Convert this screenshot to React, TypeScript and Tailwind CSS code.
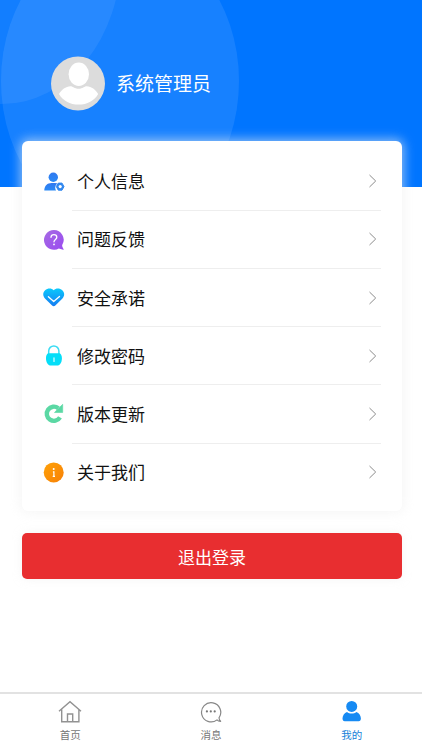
import type { ReactNode } from "react";

function UserSettingsIcon() {
  return (
    <svg width="22" height="22" viewBox="0 0 22 22">
      <defs>
        <linearGradient id="user" x1="0" y1="0" x2="0" y2="1">
          <stop offset="0" stopColor="#3179ef" />
          <stop offset="1" stopColor="#2a8af6" />
        </linearGradient>
      </defs>
      <circle cx="10.3" cy="6.2" r="4.7" fill="url(#user)" />
      <path d="M1.3 19.600c0-5 3.200-7.700 7.200-7.700h3.600c1 0 1.800.2 2.600.6-2.400 1.400-3.200 4.200-1.600 7.100z" fill="url(#user)" />
      <path d="m15.300 12.100 3.700 0 2 3.500-2 3.600h-3.700l-2-3.600z" fill="#3288ef" stroke="#3288ef" strokeWidth="1" strokeLinejoin="round" />
      <circle cx="17.200" cy="15.600" r="1.600" fill="#fff" />
    </svg>
  );
}

function QuestionIcon() {
  return (
    <svg width="22" height="22" viewBox="0 0 22 22">
      <defs>
        <linearGradient id="question" x1="0" y1="0" x2="1" y2="1">
          <stop offset="0" stopColor="#a66be3" />
          <stop offset="1" stopColor="#9a4bf0" />
        </linearGradient>
      </defs>
      <path d="M10.800 1a9.800 9.800 0 0 1 8.500 14.800c-.4.8 0 2 1.300 4.400.2.4 0 .6-.4.5l-4.400-1.200A9.900 9.900 0 1 1 10.800 1z" fill="url(#question)" />
      <path d="M8 8.300c.1-1.700 1.100-2.600 2.900-2.600s2.900 1 2.900 2.500c0 2.200-2.800 2.300-2.800 4.600" fill="none" stroke="#fff" strokeWidth="1.300" strokeLinecap="round" />
      <circle cx="11" cy="15.400" r=".9" fill="#fff" />
    </svg>
  );
}

function HeartIcon() {
  return (
    <svg width="22" height="22" viewBox="0 0 22 22">
      <defs>
        <linearGradient id="heart" x1="0" y1="0" x2="0" y2="1">
          <stop offset="0" stopColor="#09c9fc" />
          <stop offset="1" stopColor="#167bf2" />
        </linearGradient>
      </defs>
      <path d="M10.700 3.300C8.600.9 4.800.8 2.100 3.200c-2.700 2.600-2.300 6 .1 8.500l6.900 6.800c.9.900 2.300.9 3.200 0l6.900-6.800c2.400-2.500 2.800-5.900.1-8.500-2.700-2.400-6.500-2.300-8.600.1z" fill="url(#heart)" />
      <path d="m5.400 9.800 5.300 4.700 5.800-5" fill="none" stroke="#fff" strokeWidth="1.300" strokeLinecap="round" strokeLinejoin="round" />
    </svg>
  );
}

function LockIcon() {
  return (
    <svg width="22" height="22" viewBox="0 0 22 22">
      <path d="M5.700 10.500V6a5.100 5.100 0 0 1 10.200 0v4.500" fill="none" stroke="#3bdcf3" strokeWidth="1.500" />
      <path d="M5 8.300h11.800c1.600 1 2.100 3 2.100 5.200 0 3.400-1.600 7.100-5 7.100H8c-3.400 0-5-3.700-5-7.100 0-2.200.4-4.200 2-5.200z" fill="#05def8" />
      <path d="M11 12.900v3.500" stroke="#d5fbfd" strokeWidth="1.300" strokeLinecap="round" />
    </svg>
  );
}

function UpdateIcon() {
  return (
    <svg width="22" height="22" viewBox="0 0 22 22">
      <path d="M17 14.400A7.100 7.100 0 1 1 15.300 5.200" fill="none" stroke="#5bd8a4" strokeWidth="4.400" />
      <path d="M19.700 1.300v8.200h-8.200l3-3.200z" fill="#5bd8a4" stroke="#5bd8a4" strokeWidth=".6" strokeLinejoin="round" />
    </svg>
  );
}

function InfoIcon() {
  return (
    <svg width="22" height="22" viewBox="0 0 22 22">
      <defs>
        <linearGradient id="info" x1="0" y1="0" x2="1" y2="1">
          <stop offset="0" stopColor="#ffa207" />
          <stop offset="1" stopColor="#f78007" />
        </linearGradient>
      </defs>
      <circle cx="10.700" cy="10.400" r="10" fill="url(#info)" />
      <circle cx="10.700" cy="7.100" r="1" fill="#fff" />
      <path d="M9.900 9.900h1v4.400m-1.200 0h2.300" fill="none" stroke="#fff" strokeWidth="1.200" />
    </svg>
  );
}

function Row({ icon, label, last = false }: { icon: ReactNode; label: string; last?: boolean }) {
  return (
    <div className="flex h-[58.2px] items-stretch px-[21px]">
      <div className="flex w-[29px] items-center">{icon}</div>
      <div className={`flex flex-1 items-center justify-between border-b pr-[4px] pl-[5px] ${last ? "border-transparent" : "border-[#eeeeee]"}`}>
        <span className="text-[17px] leading-[24px] text-[#111]">{label}</span>
        <svg width="9" height="14" viewBox="0 0 9 14">
          <path d="m1.500 1 6.200 6-6.200 6" fill="none" stroke="#8c8c8c" strokeWidth="1" />
        </svg>
      </div>
    </div>
  );
}

function Tab({ icon, label, active = false }: { icon: ReactNode; label: string; active?: boolean }) {
  return (
    <div className={`flex flex-1 flex-col items-center pt-[5px] text-[10.5px] leading-[16px] ${active ? "text-[#1680d8]" : "text-[#777]"}`}>
      {icon}
      <span className="mt-[4px]">{label}</span>
    </div>
  );
}

export default function App() {
  return (
    <div className="flex h-[750px] w-full flex-col overflow-hidden bg-white font-['Noto_Sans_CJK_SC',sans-serif]">
      <header className="relative h-[187px] shrink-0 overflow-hidden bg-[#0075ff]">
        <svg className="absolute inset-0" width="422" height="187">
          <ellipse cx="120" cy="81" rx="119" ry="147" fill="#fff" fillOpacity=".09" />
          <ellipse cx="2" cy="-43" rx="119" ry="147" fill="#fff" fillOpacity=".07" />
        </svg>
        <div className="relative flex items-center pt-[56px] pl-[51px]">
          <svg width="54" height="55" viewBox="0 0 54 54">
            <circle cx="27" cy="27" r="27" fill="#dcdcdc" />
            <ellipse cx="27.800" cy="17.800" rx="10.200" ry="11.700" fill="#fff" />
            <path d="M8 37.500c2.500-4 6.700-7.700 11.500-7.700 2.500 0 3.800 2.500 8.100 2.500s5.600-2.500 8.100-2.500c4.800 0 9 3.700 11.500 7.700-3.900 6.700-10.900 10.600-19.600 10.600S11.900 44.200 8 37.500z" fill="#fff" />
          </svg>
          <span className="mb-[2px] ml-[11px] text-[19px] leading-[28px] text-white">系统管理员</span>
        </div>
      </header>
      <main className="relative z-10 -mt-[46px] flex flex-1 flex-col pr-[20px] pl-[22px]">
        <section className="h-[370px] rounded-[6px] bg-white pt-[11.6px] shadow-[0_0_11px_2px_rgba(240,240,240,0.6)]">
          <Row icon={<UserSettingsIcon />} label="个人信息" />
          <Row icon={<QuestionIcon />} label="问题反馈" />
          <Row icon={<HeartIcon />} label="安全承诺" />
          <Row icon={<LockIcon />} label="修改密码" />
          <Row icon={<UpdateIcon />} label="版本更新" />
          <Row icon={<InfoIcon />} label="关于我们" last />
        </section>
        <button className="mt-[22px] h-[46px] rounded-[5px] bg-[#e82e30] pt-[2px] text-[17px] text-white shadow-[0_0_10px_rgba(240,240,240,0.7)]">退出登录</button>
      </main>
      <nav className="flex h-[58px] shrink-0 border-t-2 border-[#e2e2e2]">
        <Tab
          label="首页"
          icon={
            <svg width="24" height="24" viewBox="0 0 24 24" fill="none" stroke="#929292" strokeWidth="1.4">
              <path d="M1 12.300 12 2.600l11 9.700M3.700 10.500v12.200h17.200V10.500M9.500 22.700V15h5.200v7.700" />
            </svg>
          }
        />
        <Tab
          label="消息"
          icon={
            <svg width="24" height="24" viewBox="0 0 24 24">
              <path d="M21.600 22.300c-1.400 0-2.800-.5-3.600-1.400A9.600 9.600 0 1 1 20 18.800c.1 1.500.7 2.700 1.600 3.500z" fill="none" stroke="#888" strokeWidth="1.200" strokeLinejoin="round" />
              <g fill="#777">
                <circle cx="7.900" cy="12.400" r="1.100" />
                <circle cx="11.800" cy="12.400" r="1.100" />
                <circle cx="15.700" cy="12.400" r="1.100" />
              </g>
            </svg>
          }
        />
        <Tab
          active
          label="我的"
          icon={
            <svg width="24" height="24" viewBox="0 0 24 24" fill="#168af3">
              <circle cx="11.700" cy="7.400" r="5.500" />
              <path d="M7 12.900c1.300 1.100 2.900 1.500 4.700 1.500s3.400-.4 4.700-1.500c2.700 1.100 4.500 3.500 4.500 6.700 0 1.600-.8 2.700-2.200 2.700h-14c-1.400 0-2.200-1.100-2.200-2.700 0-3.200 1.800-5.600 4.500-6.700z" />
            </svg>
          }
        />
      </nav>
    </div>
  );
}
